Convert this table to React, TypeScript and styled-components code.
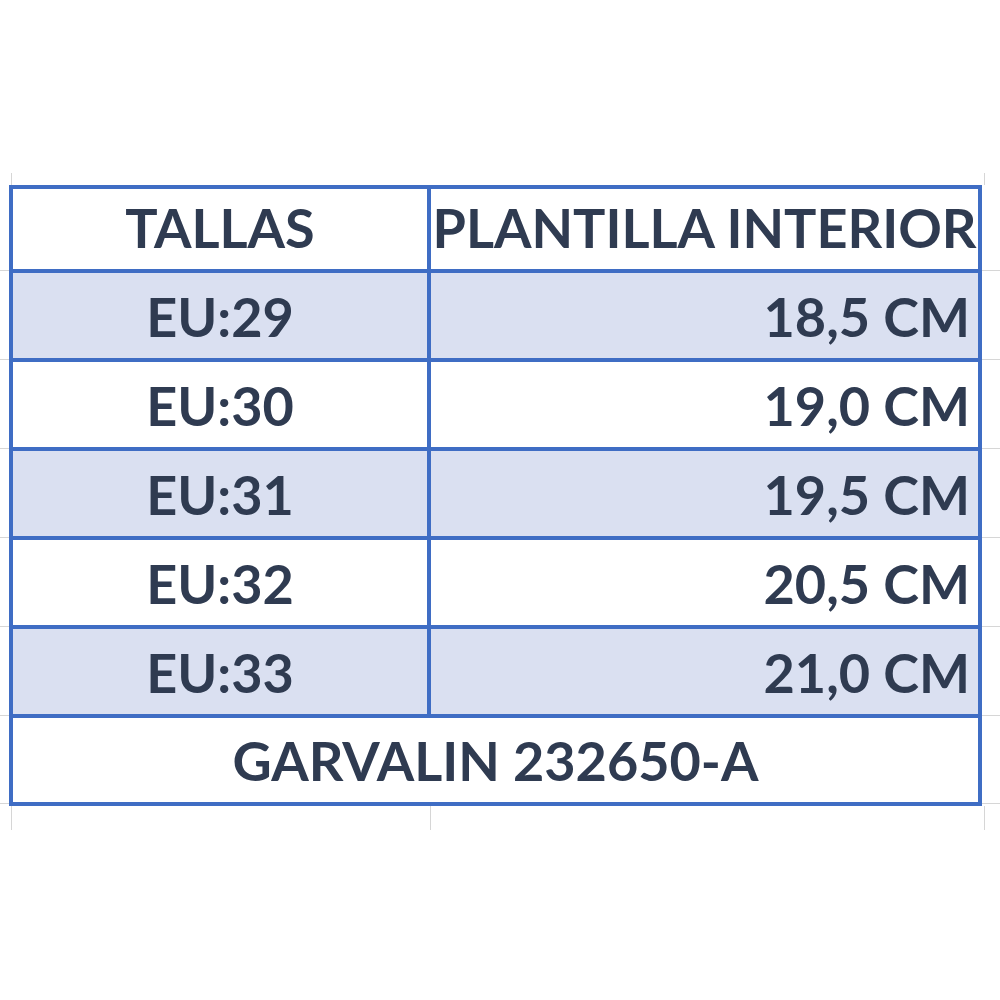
import styled, { createGlobalStyle } from 'styled-components';

const GlobalStyle = createGlobalStyle`
  html, body {
    margin: 0;
    padding: 0;
    background: #ffffff;
  }
`;

const ROWS = [
  { size: 'EU:29', length: '18,5 CM' },
  { size: 'EU:30', length: '19,0 CM' },
  { size: 'EU:31', length: '19,5 CM' },
  { size: 'EU:32', length: '20,5 CM' },
  { size: 'EU:33', length: '21,0 CM' },
];

const LINE = 4;
// heights of the cells between the blue lines, used by the side gutters too
const HEADER_H = 80;
const ROW_H = 85;
const FOOTER_H = 84;
const GUTTER_HEIGHTS = [HEADER_H, ...ROWS.map(() => ROW_H), FOOTER_H];

const S = {
  Page: styled.div`
    width: 1000px;
    height: 1000px;
    padding-top: 173px;
    box-sizing: border-box;
    font-family: Lato, "Liberation Sans", sans-serif;
  `,
  Sheet: styled.div`
    display: grid;
    grid-template-columns: 9px 973px 18px;
    grid-template-rows: 12px auto 28px;
    align-items: start;
  `,
  Stubs: styled.div<{ $h: number }>`
    grid-column: 1 / 4;
    display: grid;
    grid-template-columns: 11px 419px 554px 16px;
    height: ${(p) => p.$h}px;
  `,
  Stub: styled.div<{ $line?: boolean }>`
    border-left: ${(p) => (p.$line ? '1px solid #d6d6d6' : 'none')};
  `,
  Gutter: styled.div`
    display: flex;
    flex-direction: column;
    padding-top: ${LINE}px;
  `,
  GutterCell: styled.div`
    box-sizing: border-box;
    border-bottom: 1px solid #d6d6d6;
    margin-bottom: ${LINE - 2}px;
  `,
  Table: styled.div`
    display: grid;
    grid-template-columns: 414px 547px;
    gap: ${LINE}px;
    padding: ${LINE}px;
    background: #3f6dc4;
    color: #2f3b51;
    font-weight: 700;
    font-size: 54px;
  `,
  Cell: styled.div<{ $shaded?: boolean; $align?: 'center' | 'right'; $h: number }>`
    height: ${(p) => p.$h}px;
    background: ${(p) => (p.$shaded ? '#dae0f1' : '#ffffff')};
    display: flex;
    align-items: flex-end;
    justify-content: ${(p) => (p.$align === 'right' ? 'flex-end' : 'center')};
    padding: 0 8px 14px;
    box-sizing: border-box;
    line-height: 1;
    white-space: nowrap;
  `,
  Footer: styled.div`
    grid-column: 1 / 3;
    height: ${FOOTER_H}px;
    background: #ffffff;
    display: flex;
    align-items: flex-end;
    justify-content: center;
    padding-bottom: 14px;
    box-sizing: border-box;
    line-height: 1;
  `,
};

export default function App() {
  return (
    <S.Page>
      <GlobalStyle />
      <S.Sheet>
        <S.Stubs $h={12}>
          <S.Stub />
          <S.Stub $line />
          <S.Stub />
          <S.Stub $line />
        </S.Stubs>

        <S.Gutter>
          {GUTTER_HEIGHTS.map((h, i) => (
            <S.GutterCell key={i} style={{ height: h + 2 }} />
          ))}
        </S.Gutter>

        <S.Table>
          <S.Cell $h={HEADER_H}>TALLAS</S.Cell>
          <S.Cell $h={HEADER_H}>PLANTILLA INTERIOR</S.Cell>
          {ROWS.flatMap((r, i) => [
            <S.Cell key={r.size} $h={ROW_H} $shaded={i % 2 === 0}>
              {r.size}
            </S.Cell>,
            <S.Cell key={r.length} $h={ROW_H} $shaded={i % 2 === 0} $align="right">
              {r.length}
            </S.Cell>,
          ])}
          <S.Footer>GARVALIN 232650-A</S.Footer>
        </S.Table>

        <S.Gutter>
          {GUTTER_HEIGHTS.map((h, i) => (
            <S.GutterCell key={i} style={{ height: h + 2 }} />
          ))}
        </S.Gutter>

        <S.Stubs $h={24}>
          <S.Stub />
          <S.Stub $line />
          <S.Stub $line />
          <S.Stub $line />
        </S.Stubs>
      </S.Sheet>
    </S.Page>
  );
}
